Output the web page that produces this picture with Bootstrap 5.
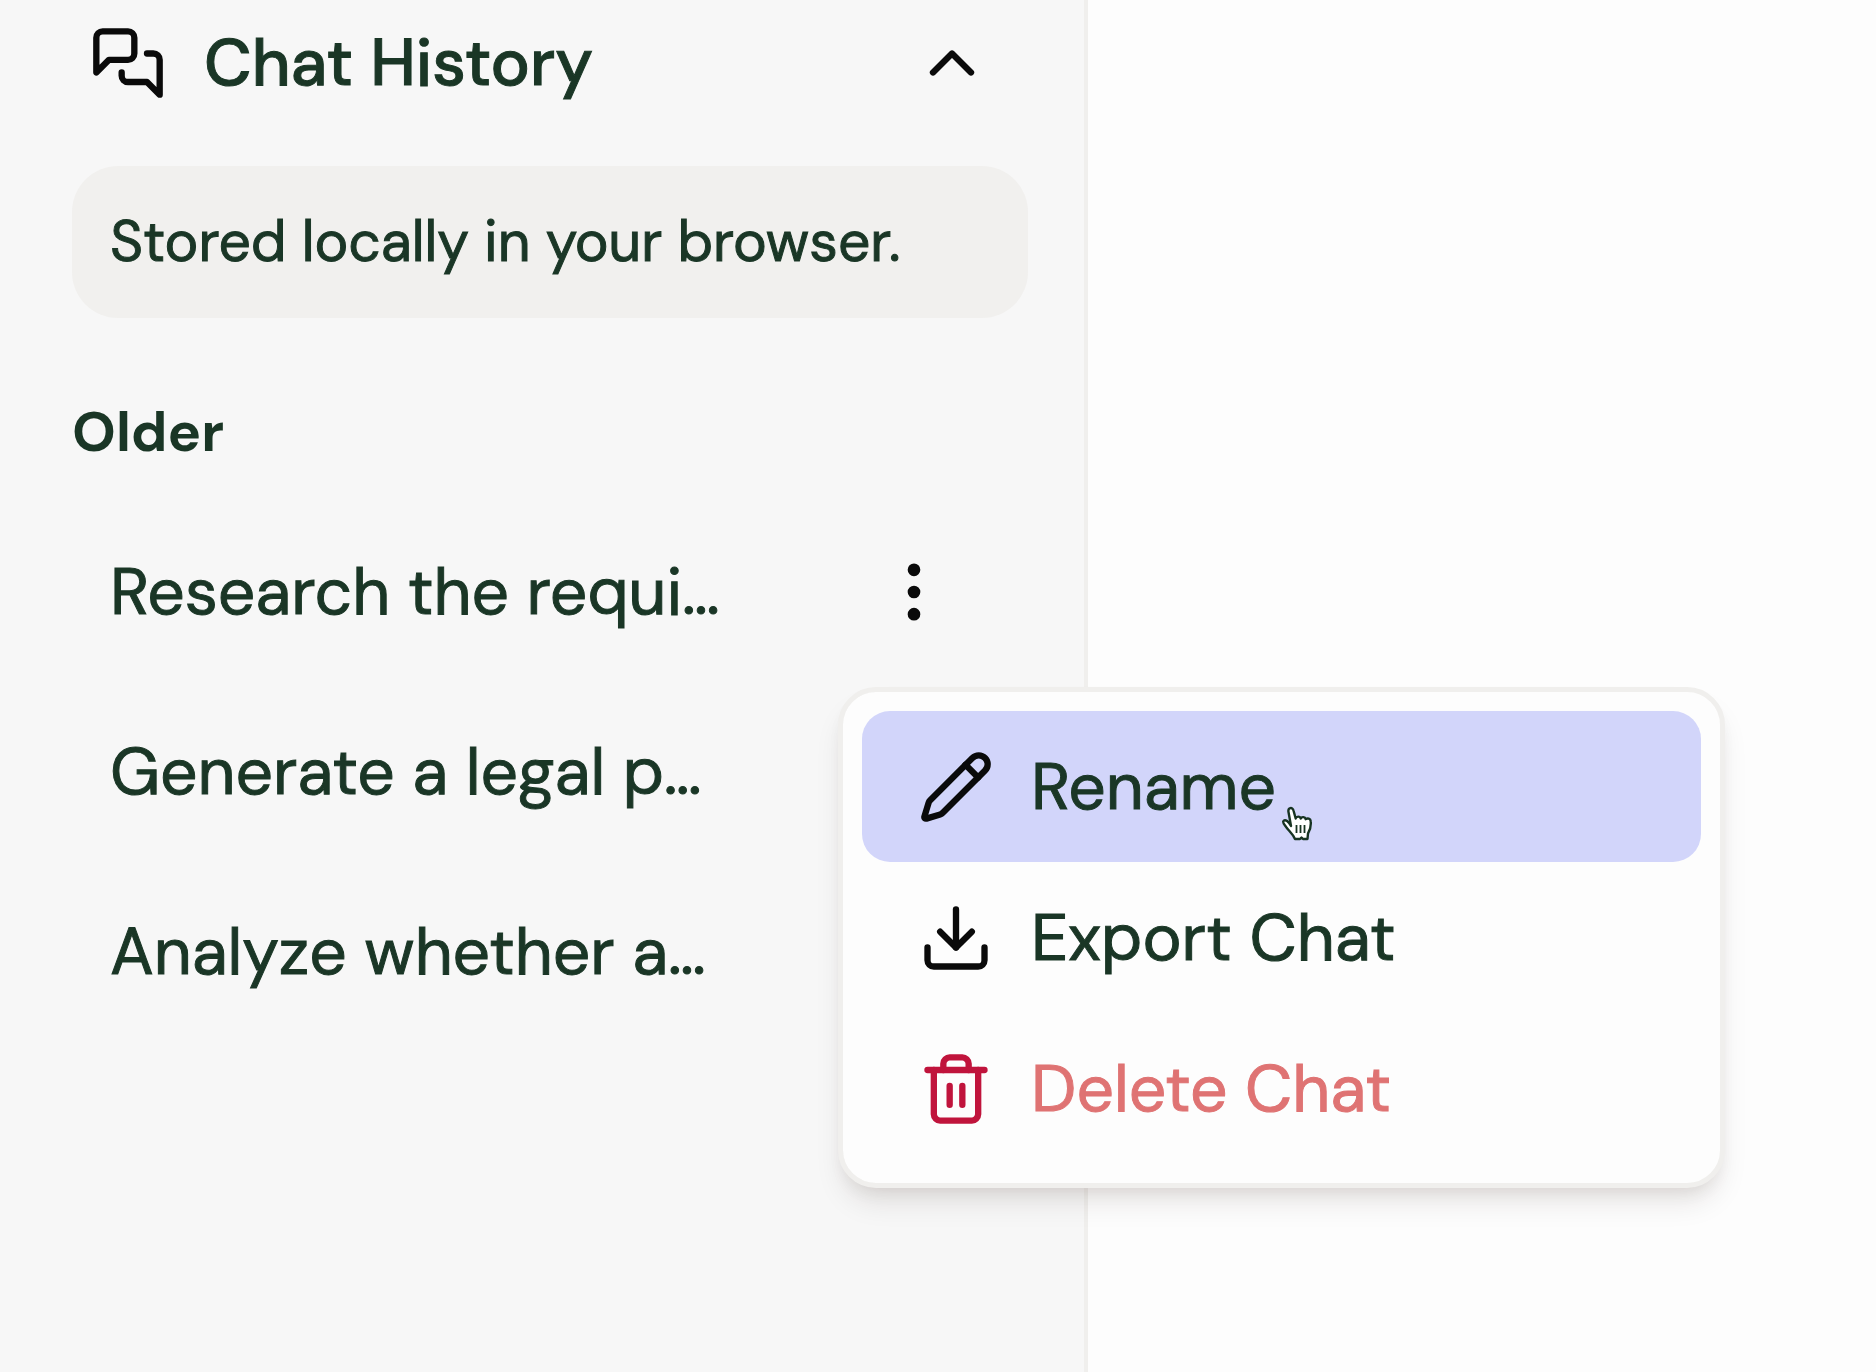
<!DOCTYPE html>
<html lang="en">
<head>
<meta charset="utf-8">
<meta name="viewport" content="width=device-width, initial-scale=1">
<title>Chat History</title>
<link href="https://cdn.jsdelivr.net/npm/bootstrap@5.3.0/dist/css/bootstrap.min.css" rel="stylesheet">
<style>
  :root { --ink: #1a3626; --icon: #0a0a0a; --line: #f0efed; --unit: 76px; }
  body { font-family: "DM Sans", Inter, "Open Sans", sans-serif; font-size: 66px; font-weight: 450; line-height: 76px; color: var(--ink); background: #fdfdfd; -webkit-text-stroke: 1px currentColor; }
  .icon { width: var(--unit); height: var(--unit); flex: none; fill: none; stroke: currentColor; stroke-width: 2; stroke-linecap: round; stroke-linejoin: round; color: var(--icon); }
  .bare { background: none; border: 0; padding: 0; color: inherit; text-align: start; }
  .side { flex: 0 0 58%; background: #f7f7f7; border-right: 4px solid var(--line); padding: 0 56px 0 72px; }
  .side-head { height: 125px; padding: 0 38px 0 18px; gap: 38px; font-weight: 550; }
  .note { margin-top: 41px; padding: 38px; border-radius: 46px; background: #f1f0ee; font-size: 57px; }
  .group-name { margin: 76px 0 46px; font-size: 56px; font-weight: 700; line-height: 76px; -webkit-text-stroke: 0; }
  .chats { gap: 28px; }
  .chat-row { height: 152px; padding: 0 38px; }
  .chat-row a { color: inherit; }
  .more { width: 152px; height: 152px; }
  .menu { --bs-dropdown-font-size: 66px; top: 100%; left: 0; margin-top: 19px; width: 887px; padding: 19px; border: 5px solid var(--line); border-radius: 38px; background: #fdfdfd; background-clip: padding-box;
    box-shadow: 0 19px 29px -5px rgba(40, 20, 10, .1), 0 10px 19px -10px rgba(40, 20, 10, .12); }
  .menu .dropdown-item { height: 151px; padding: 0 56px; gap: 37px; border-radius: 28px; color: var(--ink); font-weight: 450; }
  .menu .dropdown-item.current { background: #d2d5fa; }
  .menu .dropdown-item.danger { color: #df7373; }
  .danger .icon { color: #c0143c; }
  .pointer { position: absolute; left: 438px; top: 114px; width: 32px; height: 36px; z-index: 2; }
</style>
</head>
<body>
<div class="d-flex min-vh-100">
  <aside class="side">
    <button type="button" class="bare side-head d-flex align-items-center w-100" aria-expanded="true">
      <svg class="icon" viewBox="0 0 24 24" aria-hidden="true"><path d="M14 9a2 2 0 0 1-2 2H6l-4 4V4a2 2 0 0 1 2-2h8a2 2 0 0 1 2 2z"/><path d="M18 9h2a2 2 0 0 1 2 2v11l-4-4h-6a2 2 0 0 1-2-2v-1"/></svg>
      <span class="flex-grow-1">Chat History</span>
      <svg class="icon" viewBox="0 0 24 24" aria-hidden="true"><path d="m18 15-6-6-6 6"/></svg>
    </button>
    <p class="note mb-0">Stored locally in your browser.</p>
    <h2 class="group-name">Older</h2>
    <ul class="chats list-unstyled d-flex flex-column mb-0">
      <li class="chat-row d-flex align-items-center justify-content-between">
        <a href="#" class="text-decoration-none text-nowrap">Research the requi…</a>
        <div class="dropdown">
          <button type="button" class="bare more d-flex align-items-center justify-content-center" aria-label="Chat options" aria-expanded="true">
            <svg class="icon" viewBox="0 0 24 24" aria-hidden="true"><circle cx="12" cy="5" r="1"/><circle cx="12" cy="12" r="1"/><circle cx="12" cy="19" r="1"/></svg>
          </button>
          <div class="dropdown-menu menu show">
            <button type="button" class="dropdown-item current d-flex align-items-center">
              <svg class="icon" viewBox="0 0 24 24" aria-hidden="true"><path d="M21.174 6.812a1 1 0 0 0-3.986-3.987L3.842 16.174a2 2 0 0 0-.5.83l-1.321 4.352a.5.5 0 0 0 .623.622l4.353-1.32a2 2 0 0 0 .83-.497z"/><path d="m15 5 4 4"/></svg>
              Rename
            </button>
            <button type="button" class="dropdown-item d-flex align-items-center">
              <svg class="icon" viewBox="0 0 24 24" aria-hidden="true"><path d="M21 15v4a2 2 0 0 1-2 2H5a2 2 0 0 1-2-2v-4"/><path d="m7 10 5 5 5-5"/><path d="M12 15V3"/></svg>
              Export Chat
            </button>
            <button type="button" class="dropdown-item danger d-flex align-items-center">
              <svg class="icon" viewBox="0 0 24 24" aria-hidden="true"><path d="M3 6h18"/><path d="M19 6v14c0 1-1 2-2 2H7c-1 0-2-1-2-2V6"/><path d="M8 6V4c0-1 1-2 2-2h4c1 0 2 1 2 2v2"/><path d="M10 11v6M14 11v6"/></svg>
              Delete Chat
            </button>
            <svg class="pointer" viewBox="0 0 32 36" aria-hidden="true"><path d="M10 20 7.500 6c-.8-4.500 4-5.500 5-1.500l2.200 8c.8-2.500 4.300-2.500 5 0 1-2 4.300-1.800 5 .7 1.800-1.500 4.800-.7 5 2 .5 5-.2 8.500-2.700 12.300l-.5 5.500h-4.500l-1.500-1.500-1.500 1.500H14c-2-5-6-8-8.500-11.500-1.500-2.300-4.500-5-3-6.500 2-2 5 .5 7.500 5z" fill="#fff" stroke="#173322" stroke-width="2.400" stroke-linejoin="round"/><path d="M15.500 19v8M19.500 19v8M23.500 19v8" fill="none" stroke="#173322" stroke-width="1.800"/></svg>
          </div>
        </div>
      </li>
      <li class="chat-row d-flex align-items-center"><a href="#" class="text-decoration-none text-nowrap">Generate a legal p…</a></li>
      <li class="chat-row d-flex align-items-center"><a href="#" class="text-decoration-none text-nowrap">Analyze whether a…</a></li>
    </ul>
  </aside>
  <main class="flex-grow-1"></main>
</div>
<script src="https://cdn.jsdelivr.net/npm/bootstrap@5.3.0/dist/js/bootstrap.bundle.min.js"></script>
</body>
</html>
